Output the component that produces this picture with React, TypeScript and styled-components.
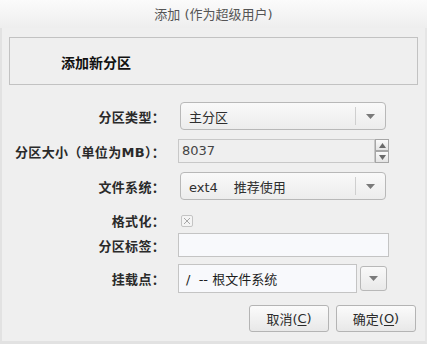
import styled, { createGlobalStyle } from "styled-components";

const GlobalStyle = createGlobalStyle`
  html, body {
    margin: 0;
    padding: 0;
    background: #efefef;
  }
  body {
    font-family: "DejaVu Sans", "Noto Sans CJK SC", sans-serif;
    font-size: 13px;
    color: #2e2e2e;
  }
`;

// 콤보박스 아래 화살표
const Arrow = () => (
  <svg width="9" height="5" viewBox="0 0 9 5">
    <path d="M0 0 H9 L4.5 5 Z" fill="#7a7a7a" />
  </svg>
);

const SpinArrow = ({ up }: { up?: boolean }) => (
  <svg width="7" height="5" viewBox="0 0 7 5">
    <path d={up ? "M0 5 H7 L3.5 0 Z" : "M0 0 H7 L3.5 5 Z"} fill="#6a6a6a" />
  </svg>
);

type ComboProps = { children: React.ReactNode };

const Combo = ({ children }: ComboProps) => (
  <StyledCombo>
    <ComboText>{children}</ComboText>
    <ComboSep />
    <ComboArrow>
      <Arrow />
    </ComboArrow>
  </StyledCombo>
);

const App = () => {
  return (
    <>
      <GlobalStyle />
      <Window>
        <TitleBar>添加 (作为超级用户)</TitleBar>
        <Body>
          <HeaderBox>添加新分区</HeaderBox>

          <Form>
            <Row $h={28} $gap={17}>
              <Label>分区类型：</Label>
              <Combo>主分区</Combo>
            </Row>

            <Row $h={24} $gap={9}>
              <Label>分区大小（单位为MB）：</Label>
              <Spin>
                <SpinEntry>8037</SpinEntry>
                <SpinButtons>
                  <SpinBtn>
                    <SpinArrow up />
                  </SpinBtn>
                  <SpinBtn>
                    <SpinArrow />
                  </SpinBtn>
                </SpinButtons>
              </Spin>
            </Row>

            <Row $h={28} $gap={9}>
              <Label>文件系统：</Label>
              <Combo>
                ext4<Hint>推荐使用</Hint>
              </Combo>
            </Row>

            <Row $h={12} $gap={11}>
              <Label>格式化：</Label>
              <Check>
                <svg width="8" height="8" viewBox="0 0 8 8">
                  <path d="M1 1 L7 7 M7 1 L1 7" stroke="#a8a8a8" strokeWidth="1" />
                </svg>
              </Check>
            </Row>

            <Row $h={24} $gap={10}>
              <Label>分区标签：</Label>
              <Entry $w={211} />
            </Row>

            <Row $h={29} $gap={7}>
              <Label>挂载点：</Label>
              <MountWrap>
                <Entry $w={179}>/ &nbsp;-- 根文件系统</Entry>
                <SmallButton>
                  <Arrow />
                </SmallButton>
              </MountWrap>
            </Row>
          </Form>

          <Buttons>
            <Button>
              取消(<u>C</u>)
            </Button>
            <Button>
              确定(<u>O</u>)
            </Button>
          </Buttons>
        </Body>
      </Window>
    </>
  );
};

export default App;

const Window = styled.div`
  width: 427px;
  height: 344px;
  display: flex;
  flex-direction: column;
  background: #efefef;
  overflow: hidden;
`;

const TitleBar = styled.div`
  height: 28px;
  line-height: 29px;
  text-align: center;
  font-size: 13px;
  color: #555;
  background: linear-gradient(#fbfbfb, #eeeeee);
`;

const Body = styled.div`
  flex: 1;
  border-left: 2px solid #e2e2e2;
  border-right: 2px solid #e6e6e6;
  border-bottom: 3px solid #e2e2e2;
  padding: 9px 7px 0 7px;
  display: flex;
  flex-direction: column;
`;

const HeaderBox = styled.div`
  height: 48px;
  box-sizing: border-box;
  border: 1px solid #c2c2c2;
  display: flex;
  align-items: center;
  padding-left: 51px;
  padding-top: 1px;
  font-size: 14px;
  font-weight: bold;
  color: #111;
`;

const Form = styled.div`
  display: flex;
  flex-direction: column;
`;

const Row = styled.div<{ $h: number; $gap: number }>`
  display: grid;
  grid-template-columns: 156px auto;
  column-gap: 13px;
  align-items: center;
  height: ${(p) => p.$h}px;
  margin-top: ${(p) => p.$gap}px;
`;

const Label = styled.div`
  text-align: right;
  font-weight: bold;
  font-size: 13px;
  letter-spacing: 0.3px;
  color: #2a2a2a;
  white-space: nowrap;
`;

const StyledCombo = styled.div`
  width: 206px;
  height: 28px;
  margin-left: 2px;
  box-sizing: border-box;
  border: 1px solid #b8b8b8;
  border-radius: 4px;
  background: linear-gradient(#f9f9f9, #ececec);
  display: flex;
  align-items: center;
`;

const ComboText = styled.div`
  flex: 1;
  padding-left: 8px;
  color: #2e2e2e;
`;

const Hint = styled.span`
  margin-left: 16px;
`;

const ComboSep = styled.div`
  width: 1px;
  height: 18px;
  background: #cfcfcf;
`;

const ComboArrow = styled.div`
  width: 29px;
  display: flex;
  justify-content: center;
  align-items: center;
`;

const Spin = styled.div`
  display: flex;
  align-items: center;
  height: 24px;
`;

const SpinEntry = styled.div`
  width: 197px;
  height: 24px;
  box-sizing: border-box;
  border: 1px solid #c8c8c8;
  background: #efefef;
  padding-left: 3px;
  line-height: 22px;
  color: #444;
`;

const SpinButtons = styled.div`
  display: flex;
  flex-direction: column;
`;

const SpinBtn = styled.div`
  width: 14px;
  height: 12px;
  box-sizing: border-box;
  border: 1px solid #a6a6a6;
  background: linear-gradient(#fafafa, #e4e4e4);
  display: flex;
  align-items: center;
  justify-content: center;
`;

const Check = styled.div`
  width: 12px;
  height: 12px;
  margin-left: 3px;
  box-sizing: border-box;
  border: 1px solid #c4c4c4;
  border-radius: 2px;
  background: #f4f4f4;
  display: flex;
  align-items: center;
  justify-content: center;
`;

const Entry = styled.div<{ $w: number }>`
  width: ${(p) => p.$w}px;
  height: 100%;
  box-sizing: border-box;
  border: 1px solid #c4c4c4;
  background: #f8f9fc;
  display: flex;
  align-items: center;
  padding-left: 7px;
  color: #1e1e1e;
`;

const MountWrap = styled.div`
  display: flex;
  align-items: center;
  gap: 3px;
  height: 29px;
`;

const SmallButton = styled.div`
  width: 27px;
  height: 25px;
  box-sizing: border-box;
  border: 1px solid #b8b8b8;
  border-radius: 3px;
  background: linear-gradient(#f9f9f9, #e9e9e9);
  display: flex;
  align-items: center;
  justify-content: center;
`;

const Buttons = styled.div`
  display: flex;
  justify-content: flex-end;
  gap: 7px;
  margin-top: 12px;
  padding-right: 2px;
`;

const Button = styled.div`
  width: 80px;
  height: 27px;
  box-sizing: border-box;
  border: 1px solid #b4b4b4;
  border-radius: 3px;
  background: linear-gradient(#fbfbfb, #e8e8e8);
  display: flex;
  align-items: center;
  justify-content: center;
  color: #2a2a2a;

  u {
    text-underline-offset: 2px;
  }
`;
